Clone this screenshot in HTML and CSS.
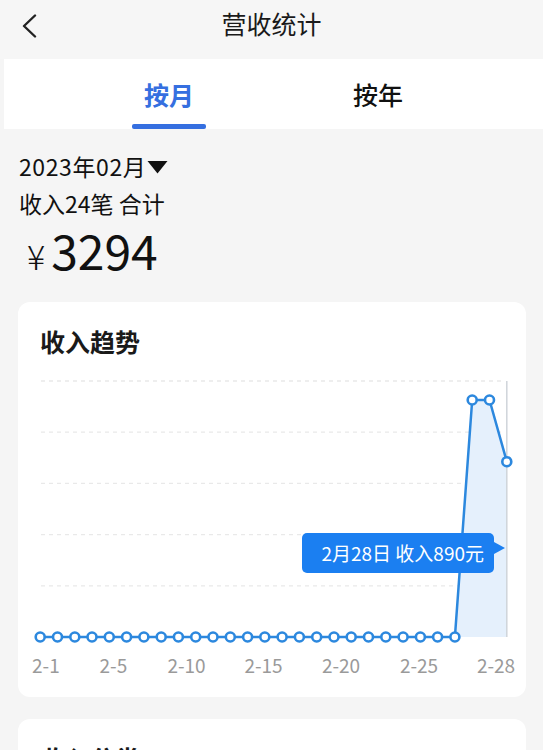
FILE: index.html
```html
<!DOCTYPE html>
<html>
<head>
<meta charset="utf-8" />
<title>营收统计</title>
<meta name="viewport" content="width=device-width, initial-scale=1.0"/>
<link rel="stylesheet" href="styles.css">
</head>
<body>

<header class="topbar">
  <span class="back">
    <svg width="16" height="24" viewBox="0 0 16 24"><path d="M14 1.5 L3 12 L14 22.5" fill="none" stroke="#222" stroke-width="2.4" stroke-linecap="round" stroke-linejoin="round"/></svg>
  </span>
  <h1 class="titre">营收统计</h1>
  <span class="cale"></span>
</header>

<nav class="onglets">
  <span class="onglet actif">按月</span>
  <span class="onglet">按年</span>
</nav>

<section class="resume">
  <div class="mois">2023年02月<svg class="fleche" width="21" height="14" viewBox="0 0 21 14"><path d="M0.5 1 H20.5 L10.5 13.5 Z" fill="#111"/></svg></div>
  <div class="nombre">收入24笔 合计</div>
  <div class="montant"><span class="yen">¥</span>3294</div>
</section>

<section class="carte">
  <h2 class="carte-titre">收入趋势</h2>
  <div class="graphe">
    <svg width="507" height="338" viewBox="0 0 507 338">
      <!-- grille -->
      <g stroke="#e9e9e9" stroke-width="1.3" stroke-dasharray="4 4">
        <line x1="23" y1="22" x2="486" y2="22"/>
        <line x1="23" y1="73.2" x2="486" y2="73.2"/>
        <line x1="23" y1="124.4" x2="486" y2="124.4"/>
        <line x1="23" y1="175.6" x2="486" y2="175.6"/>
        <line x1="23" y1="226.8" x2="486" y2="226.8"/>
      </g>
      <polygon points="436.9,278 454.2,41 471.5,41 488.8,102.7 488.8,278" fill="#e5f0fc"/>
      <line x1="488.8" y1="22" x2="488.8" y2="278" stroke="#cfd4da" stroke-width="1.5"/>
      <polyline fill="none" stroke="#2c88de" stroke-width="2.5" stroke-linejoin="round"
        points="22.2,278 436.9,278 454.2,41 471.5,41 488.8,102.7"/>
      <g fill="#fff" stroke="#2c88de" stroke-width="2.6">
        <circle cx="22.2" cy="278" r="4.5"/><circle cx="39.5" cy="278" r="4.5"/>
        <circle cx="56.8" cy="278" r="4.5"/><circle cx="74.0" cy="278" r="4.5"/>
        <circle cx="91.3" cy="278" r="4.5"/><circle cx="108.6" cy="278" r="4.5"/>
        <circle cx="125.9" cy="278" r="4.5"/><circle cx="143.2" cy="278" r="4.5"/>
        <circle cx="160.4" cy="278" r="4.5"/><circle cx="177.7" cy="278" r="4.5"/>
        <circle cx="195.0" cy="278" r="4.5"/><circle cx="212.3" cy="278" r="4.5"/>
        <circle cx="229.6" cy="278" r="4.5"/><circle cx="246.8" cy="278" r="4.5"/>
        <circle cx="264.1" cy="278" r="4.5"/><circle cx="281.4" cy="278" r="4.5"/>
        <circle cx="298.7" cy="278" r="4.5"/><circle cx="316.0" cy="278" r="4.5"/>
        <circle cx="333.2" cy="278" r="4.5"/><circle cx="350.5" cy="278" r="4.5"/>
        <circle cx="367.8" cy="278" r="4.5"/><circle cx="385.1" cy="278" r="4.5"/>
        <circle cx="402.4" cy="278" r="4.5"/><circle cx="419.6" cy="278" r="4.5"/>
        <circle cx="436.9" cy="278" r="4.5"/><circle cx="454.2" cy="41" r="4.5"/>
        <circle cx="471.5" cy="41" r="4.5"/><circle cx="488.8" cy="102.7" r="4.5"/>
      </g>
      <g class="axe" text-anchor="middle">
        <text x="27.9" y="314">2-1</text>
        <text x="95.4" y="314">2-5</text>
        <text x="168.5" y="314">2-10</text>
        <text x="245.5" y="314">2-15</text>
        <text x="323" y="314">2-20</text>
        <text x="401" y="314">2-25</text>
        <text x="478" y="314">2-28</text>
      </g>
    </svg>
    <div class="bulle">2月28日 收入890元</div>
  </div>
</section>

<section class="carte">
  <h2 class="carte-titre">收入分类</h2>
</section>

</body>
</html>
```

FILE: styles.css
```css
body {
  margin: 0;
  background: #f5f5f5;
  color: #111;
  font-family: "Noto Sans CJK SC", sans-serif;
  overflow: hidden;
}

/* barre du haut */
.topbar {
  display: flex;
  height: 59px;
  box-sizing: border-box;
  padding-top: 6px;
  background: #f6f6f6;
}
.back { width: 58px; padding: 8px 0 0 21px; box-sizing: border-box; }
.cale { width: 58px; }
.titre {
  flex: 1;
  margin: 0;
  text-align: center;
  font-size: 25px;
  line-height: 35px;
  font-weight: 400;
  color: #1a1a1a;
}

/* onglets */
.onglets {
  display: flex;
  justify-content: center;
  margin-left: 4px;
  padding-top: 18px;
  background: #fff;
}
.onglet {
  width: 209px;
  display: flex;
  flex-direction: column;
  align-items: center;
  font-size: 25px;
  line-height: 35px;
  font-weight: 500;
  color: #111;
}
.onglet::after {
  content: "";
  display: block;
  width: 74px;
  height: 5px;
  margin-top: 12px;
  border-radius: 2px;
  background: transparent;
}
.actif { color: #356fe0; font-weight: 700; }
.actif::after { background: #356fe0; }

/* résumé */
.resume { padding: 21px 0 0 19px; }
.mois {
  font-size: 23px;
  line-height: 32px;
  letter-spacing: 0.6px;
  display: flex;
  align-items: center;
}
.fleche { margin: 2px 0 0 1px; }
.nombre { font-size: 23px; line-height: 32px; margin-top: 5px; }
.montant {
  font-size: 48px;
  line-height: 50px;
  padding-top: 4px;
  margin-top: 1px;
}
.yen { font-size: 34px; margin: 0 6px 0 8px; font-weight: 300; }

/* cartes */
.carte {
  margin: 21px 17px 0 18px;
  background: #fff;
  border-radius: 12px;
  padding-top: 22px;
}
.carte + .carte { margin-top: 22px; height: 120px; }
.carte-titre {
  margin: 0 0 0 22px;
  font-size: 25px;
  line-height: 35px;
  font-weight: 700;
  color: #1a1a1a;
}
.graphe { position: relative; height: 338px; }
.graphe svg { display: block; }
.axe { font-family: "Noto Sans CJK SC", sans-serif; font-size: 19px; fill: #9a9a9a; }

.bulle {
  position: absolute;
  left: 284px;
  top: 174px;
  width: 192px;
  height: 40px;
  box-sizing: border-box;
  padding-right: 10px;
  border-radius: 5px;
  background: #1b7ff1;
  color: #fff;
  font-size: 19px;
  line-height: 40px;
  text-align: right;
}
.bulle::after {
  content: "";
  position: absolute;
  left: 100%;
  top: 9px;
  border-left: 11px solid #1b7ff1;
  border-top: 6.5px solid transparent;
  border-bottom: 6.5px solid transparent;
}
```
